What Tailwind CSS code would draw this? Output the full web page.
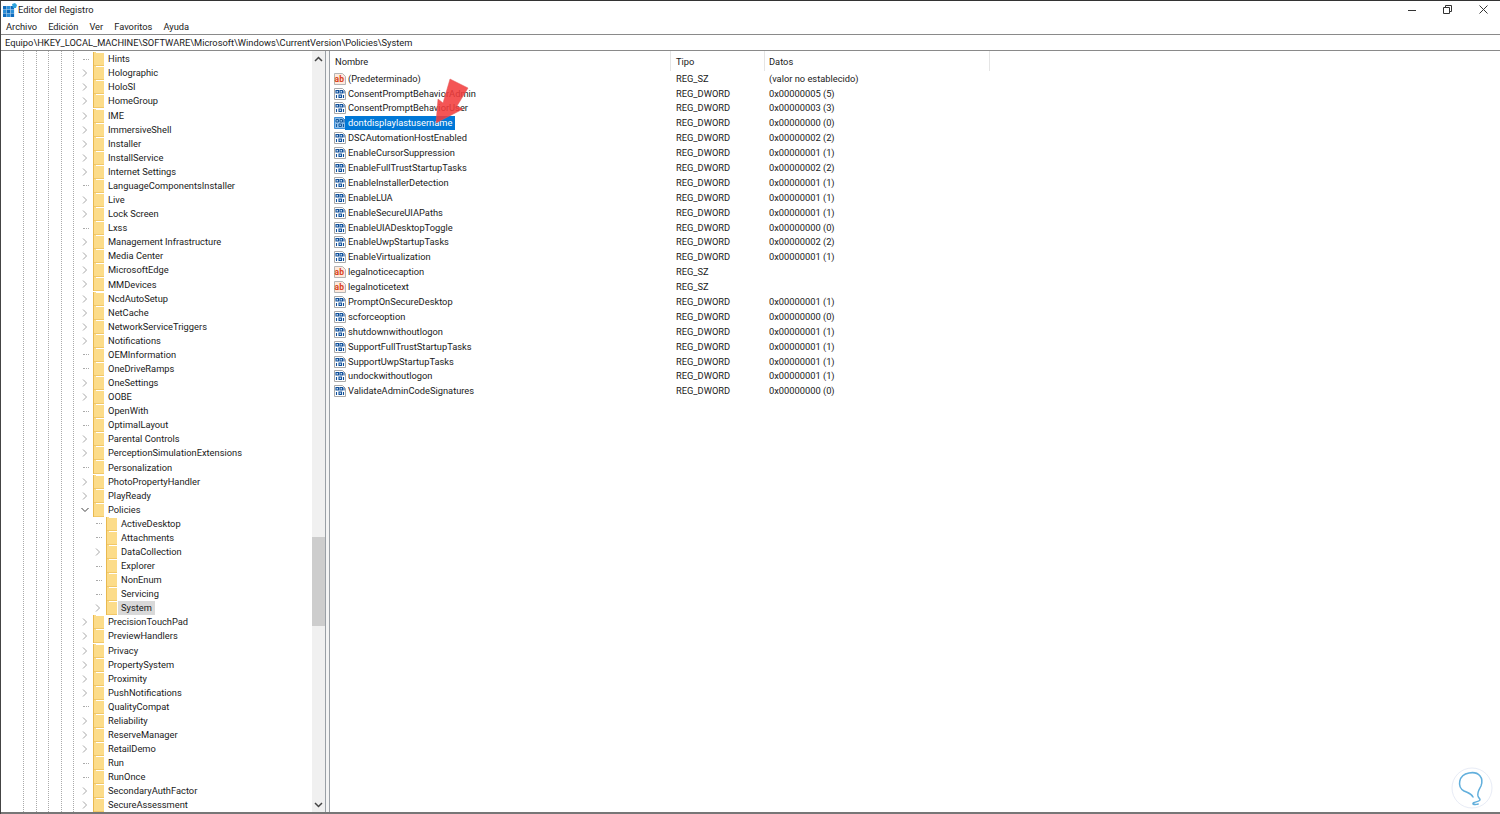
<!DOCTYPE html>
<html lang="es">
<head>
    <meta charset="UTF-8">
    <title>Editor del Registro</title>
    <script src="https://cdn.jsdelivr.net/npm/@tailwindcss/browser@4"></script>
</head>
<body class="bg-white font-['Roboto',sans-serif] text-[9.3px] text-[#1a1a1a] overflow-hidden">
<div class="relative flex flex-col h-[814px] w-[1500px] overflow-hidden border-l border-l-[#444] border-t border-t-[#333]">

    <!-- Title bar -->
    <div class="flex items-center h-[17px] shrink-0 pl-[2px]">
        <svg width="14" height="14" viewBox="0 0 14 14" class="mr-[1px] mt-[1px]">
            <rect x="0" y="3" width="3.500" height="3.500" fill="#0f6cbd"/><rect x="3.800" y="3" width="3.500" height="3.500" fill="#2b8fd8"/><rect x="7.600" y="3" width="3.500" height="3.500" fill="#0f6cbd"/>
            <rect x="0" y="6.800" width="3.500" height="3.500" fill="#2b8fd8"/><rect x="3.800" y="6.800" width="3.500" height="3.500" fill="#0f6cbd"/><rect x="7.600" y="6.800" width="3.500" height="3.500" fill="#2b8fd8"/>
            <rect x="0" y="10.500" width="3.500" height="3.500" fill="#0f6cbd"/><rect x="3.800" y="10.500" width="3.500" height="3.500" fill="#2b8fd8"/><rect x="7.600" y="10.500" width="3.500" height="3.500" fill="#0f6cbd"/>
            <path d="M9 1l3-1 2 2-1 3-3 0z" fill="#2fa4dc"/>
        </svg>
        <span class="pt-[1px]">Editor del Registro</span>
        <div class="ml-auto flex items-center">
            <svg width="12" height="12" viewBox="0 0 12 12" class="mr-[23px]"><path d="M1 6.500h8" stroke="#333" stroke-width="1"/></svg>
            <svg width="12" height="12" viewBox="0 0 12 12" class="mr-[24px]"><path d="M1.500 3.500h6v6h-6zM3.500 3.500v-2h6v6h-2" fill="none" stroke="#333" stroke-width="1"/></svg>
            <svg width="12" height="12" viewBox="0 0 12 12" class="mr-[10px]"><path d="M1.500 1.500l8 8M9.500 1.500l-8 8" stroke="#333" stroke-width="1"/></svg>
        </div>
    </div>

    <!-- Menu -->
    <div class="flex items-center gap-[11px] h-[16px] shrink-0 pl-[5px] pt-[1px]">
        <span>Archivo</span><span>Edición</span><span>Ver</span><span>Favoritos</span><span>Ayuda</span>
    </div>

    <!-- Address bar -->
    <div class="flex items-center h-[17px] shrink-0 pl-[4px] pt-[1px] border-y border-[#8a8a8a]">Equipo\HKEY_LOCAL_MACHINE\SOFTWARE\Microsoft\Windows\CurrentVersion\Policies\System</div>

    <div class="flex flex-1 min-h-0 border-b-2 border-[#777]">
        <!-- Tree pane -->
        <div class="relative w-[311px] shrink-0 overflow-hidden">
            <div class="absolute top-0 bottom-0 left-[22px] border-l border-dotted border-[#aaa]"></div>
            <div class="absolute top-0 bottom-0 left-[35px] border-l border-dotted border-[#aaa]"></div>
            <div class="absolute top-0 bottom-0 left-[47px] border-l border-dotted border-[#aaa]"></div>
            <div class="absolute top-0 bottom-0 left-[60px] border-l border-dotted border-[#aaa]"></div>
            <div class="absolute top-0 bottom-0 left-[72px] border-l border-dotted border-[#aaa]"></div>
            <div id="tree" class="pt-[1.2px]"></div>
        </div>

        <!-- Tree scrollbar -->
        <div class="flex flex-col w-[13px] shrink-0 bg-[#f0f0f0]">
            <div class="flex items-center justify-center h-[15px]">
                <svg width="9" height="6" viewBox="0 0 9 6"><path d="M1 5l3.500-3.500L8 5" fill="none" stroke="#444" stroke-width="1.500"/></svg>
            </div>
            <div class="h-[471px]"></div>
            <div class="h-[89px] bg-[#cdcdcd]"></div>
            <div class="flex-1"></div>
            <div class="flex items-center justify-center h-[15px]">
                <svg width="9" height="6" viewBox="0 0 9 6"><path d="M1 1l3.500 3.500L8 1" fill="none" stroke="#444" stroke-width="1.500"/></svg>
            </div>
        </div>

        <!-- Splitter -->
        <div class="w-[5px] shrink-0 border-x border-[#9aa0a6] bg-[#f4f4f4]"></div>

        <!-- Values pane -->
        <div class="flex-1 min-w-0">
            <div class="flex h-[20px] items-center">
                <div class="w-[341px] h-full flex items-center pl-[5px] pt-[1px] border-r border-[#e5e5e5]">Nombre</div>
                <div class="w-[94px] h-full flex items-center pl-[5px] pt-[1px] border-r border-[#e5e5e5]">Tipo</div>
                <div class="w-[225px] h-full flex items-center pl-[4px] pt-[1px] border-r border-[#e5e5e5]">Datos</div>
            </div>
            <div id="values" class="pt-[0.2px]"></div>
        </div>
    </div>

    <!-- Red arrow over the list -->
    <svg class="absolute left-[430px] top-[74px]" width="44" height="50" viewBox="0 0 44 50">
        <path d="M19 4L37 13 26 31l6 3L5 48 7 24l5 4z" fill="#f23c3c" fill-opacity="0.87" stroke="#e05a5a" stroke-width="0.500"/>
    </svg>

    <!-- Watermark -->
    <svg class="absolute left-[1450px] top-[766px]" width="44" height="44" viewBox="0 0 44 44">
        <circle cx="21" cy="21" r="20" fill="#fff" fill-opacity="0.7" stroke="#e8ecf6" stroke-width="1"/>
        <path d="M13 24C6 20 7 8 18 6c10-2 15 5 12 13-2 4-4 6-3 10 1 3 2 2 2 4-1 2-8 2-7 4 2 1 6 0 5 0M13 24c4 2 7 2 9 6" fill="none" stroke="#62afdc" stroke-width="1.500" stroke-linecap="round"/>
    </svg>
</div>

<script>
    // [name, chevron, depth, selected]
    const treeRows = [
        ['Hints', 0], ['Holographic', 1], ['HoloSI', 1], ['HomeGroup', 1], ['IME', 1], ['ImmersiveShell', 1],
        ['Installer', 1], ['InstallService', 1], ['Internet Settings', 1], ['LanguageComponentsInstaller', 0],
        ['Live', 1], ['Lock Screen', 1], ['Lxss', 0], ['Management Infrastructure', 1], ['Media Center', 1],
        ['MicrosoftEdge', 1], ['MMDevices', 1], ['NcdAutoSetup', 1], ['NetCache', 1], ['NetworkServiceTriggers', 1],
        ['Notifications', 1], ['OEMInformation', 0], ['OneDriveRamps', 0], ['OneSettings', 1], ['OOBE', 1],
        ['OpenWith', 0], ['OptimalLayout', 0], ['Parental Controls', 1], ['PerceptionSimulationExtensions', 1],
        ['Personalization', 0], ['PhotoPropertyHandler', 1], ['PlayReady', 1], ['Policies', 2],
        ['ActiveDesktop', 0, 1], ['Attachments', 0, 1], ['DataCollection', 1, 1], ['Explorer', 0, 1],
        ['NonEnum', 0, 1], ['Servicing', 0, 1], ['System', 1, 1, 1],
        ['PrecisionTouchPad', 1], ['PreviewHandlers', 1], ['Privacy', 1], ['PropertySystem', 1], ['Proximity', 1],
        ['PushNotifications', 1], ['QualityCompat', 0], ['Reliability', 1], ['ReserveManager', 1], ['RetailDemo', 1],
        ['Run', 0], ['RunOnce', 0], ['SecondaryAuthFactor', 1], ['SecureAssessment', 1]
    ];

    const chevronRight = '<svg width="6" height="8" viewBox="0 0 6 8" class="shrink-0"><path d="M1 .5L4.500 4 1 7.500" fill="none" stroke="#a6a6a6" stroke-width="1"/></svg>';
    const chevronDown = '<svg width="8" height="6" viewBox="0 0 8 6" class="shrink-0"><path d="M.5 1L4 4.500 7.500 1" fill="none" stroke="#404040" stroke-width="1"/></svg>';
    const dash = '<div class="w-[6px] border-t border-dotted border-[#aaa] ml-[2px]"></div>';
    const folder = '<svg width="11" height="14" viewBox="0 0 11 14" class="shrink-0"><path d="M1 0h2v1h8v13H0V0z" fill="#fcdc8a"/><path d="M0 0h1v14H0z" fill="#e9b94f"/><path d="M1 13h10v1H1z" fill="#f2c868"/></svg>';

    document.getElementById('tree').innerHTML = treeRows.map(([name, chev, child, sel]) => {
        const icon = chev === 2 ? chevronDown : chev === 1 ? chevronRight : dash;
        const left = child ? 'ml-[93px]' : 'ml-[80px]';
        const label = sel
            ? '<span class="bg-[#d9d9d9] pl-[3px] pr-[3px] -ml-[3px]">' + name + '</span>'
            : '<span>' + name + '</span>';
        return '<div class="flex items-center h-[14.09px] whitespace-nowrap">'
            + '<div class="w-[8px] flex justify-center shrink-0 ' + left + '">' + icon + '</div>'
            + '<div class="ml-[4px] mr-[4px] flex shrink-0">' + folder + '</div>' + label + '</div>';
    }).join('');

    const valueRows = [
        ['sz', '(Predeterminado)', 'REG_SZ', '(valor no establecido)'],
        ['dw', 'ConsentPromptBehaviorAdmin', 'REG_DWORD', '0x00000005 (5)'],
        ['dw', 'ConsentPromptBehaviorUser', 'REG_DWORD', '0x00000003 (3)'],
        ['dw', 'dontdisplaylastusername', 'REG_DWORD', '0x00000000 (0)', 1],
        ['dw', 'DSCAutomationHostEnabled', 'REG_DWORD', '0x00000002 (2)'],
        ['dw', 'EnableCursorSuppression', 'REG_DWORD', '0x00000001 (1)'],
        ['dw', 'EnableFullTrustStartupTasks', 'REG_DWORD', '0x00000002 (2)'],
        ['dw', 'EnableInstallerDetection', 'REG_DWORD', '0x00000001 (1)'],
        ['dw', 'EnableLUA', 'REG_DWORD', '0x00000001 (1)'],
        ['dw', 'EnableSecureUIAPaths', 'REG_DWORD', '0x00000001 (1)'],
        ['dw', 'EnableUIADesktopToggle', 'REG_DWORD', '0x00000000 (0)'],
        ['dw', 'EnableUwpStartupTasks', 'REG_DWORD', '0x00000002 (2)'],
        ['dw', 'EnableVirtualization', 'REG_DWORD', '0x00000001 (1)'],
        ['sz', 'legalnoticecaption', 'REG_SZ', ''],
        ['sz', 'legalnoticetext', 'REG_SZ', ''],
        ['dw', 'PromptOnSecureDesktop', 'REG_DWORD', '0x00000001 (1)'],
        ['dw', 'scforceoption', 'REG_DWORD', '0x00000000 (0)'],
        ['dw', 'shutdownwithoutlogon', 'REG_DWORD', '0x00000001 (1)'],
        ['dw', 'SupportFullTrustStartupTasks', 'REG_DWORD', '0x00000001 (1)'],
        ['dw', 'SupportUwpStartupTasks', 'REG_DWORD', '0x00000001 (1)'],
        ['dw', 'undockwithoutlogon', 'REG_DWORD', '0x00000001 (1)'],
        ['dw', 'ValidateAdminCodeSignatures', 'REG_DWORD', '0x00000000 (0)']
    ];

    const szIcon = '<svg width="12" height="12" viewBox="0 0 12 12" class="shrink-0"><path d="M.5.5h8l3 3v8H.5z" fill="#ffe9dc" stroke="#b5b5b5"/><text x="0.600" y="8.500" font-size="8.500" font-weight="700" fill="#d9431a" font-family="Roboto">ab</text></svg>';
    const dwIcon = '<svg width="12" height="12" viewBox="0 0 12 12" class="shrink-0"><path d="M.5.5h8l3 3v8H.5z" fill="#fff" stroke="#a9a9a9"/><path d="M2 2.500h2.500v2.500H2zM6 2.500h2.500v2.500H6zM5 7h2.500v2.500H5z" fill="#cfe2f5" stroke="#0f4f9a" stroke-width="1.100"/><path d="M10 2.500v3M2.500 7v3M9.500 7v3" stroke="#0f4f9a" stroke-width="1.100"/></svg>';
    const dwIconSel = '<svg width="12" height="12" viewBox="0 0 12 12" class="shrink-0"><path d="M.5.5h8l3 3v8H.5z" fill="#8dbde8" stroke="#3f8fd6"/><path d="M2 2.500h2.500v2.500H2zM6 2.500h2.500v2.500H6zM5 7h2.500v2.500H5z" fill="none" stroke="#145a9e"/><path d="M10 2.500v3M2.500 7v3M9.500 7v3" stroke="#145a9e"/></svg>';

    document.getElementById('values').innerHTML = valueRows.map(([kind, name, type, data, sel]) => {
        const label = sel
            ? '<span class="bg-[#0078d7] text-white px-[3px] -mx-[3px] leading-[14px]">' + name + '</span>'
            : '<span>' + name + '</span>';
        return '<div class="flex items-center h-[14.9px] whitespace-nowrap">'
            + '<div class="w-[341px] flex items-center pl-[4px] gap-[2px] shrink-0">' + (kind === 'sz' ? szIcon : sel ? dwIconSel : dwIcon) + label + '</div>'
            + '<div class="w-[94px] pl-[5px] shrink-0">' + type + '</div>'
            + '<div class="pl-[4px]">' + data + '</div></div>';
    }).join('');
</script>
</body>
</html>
